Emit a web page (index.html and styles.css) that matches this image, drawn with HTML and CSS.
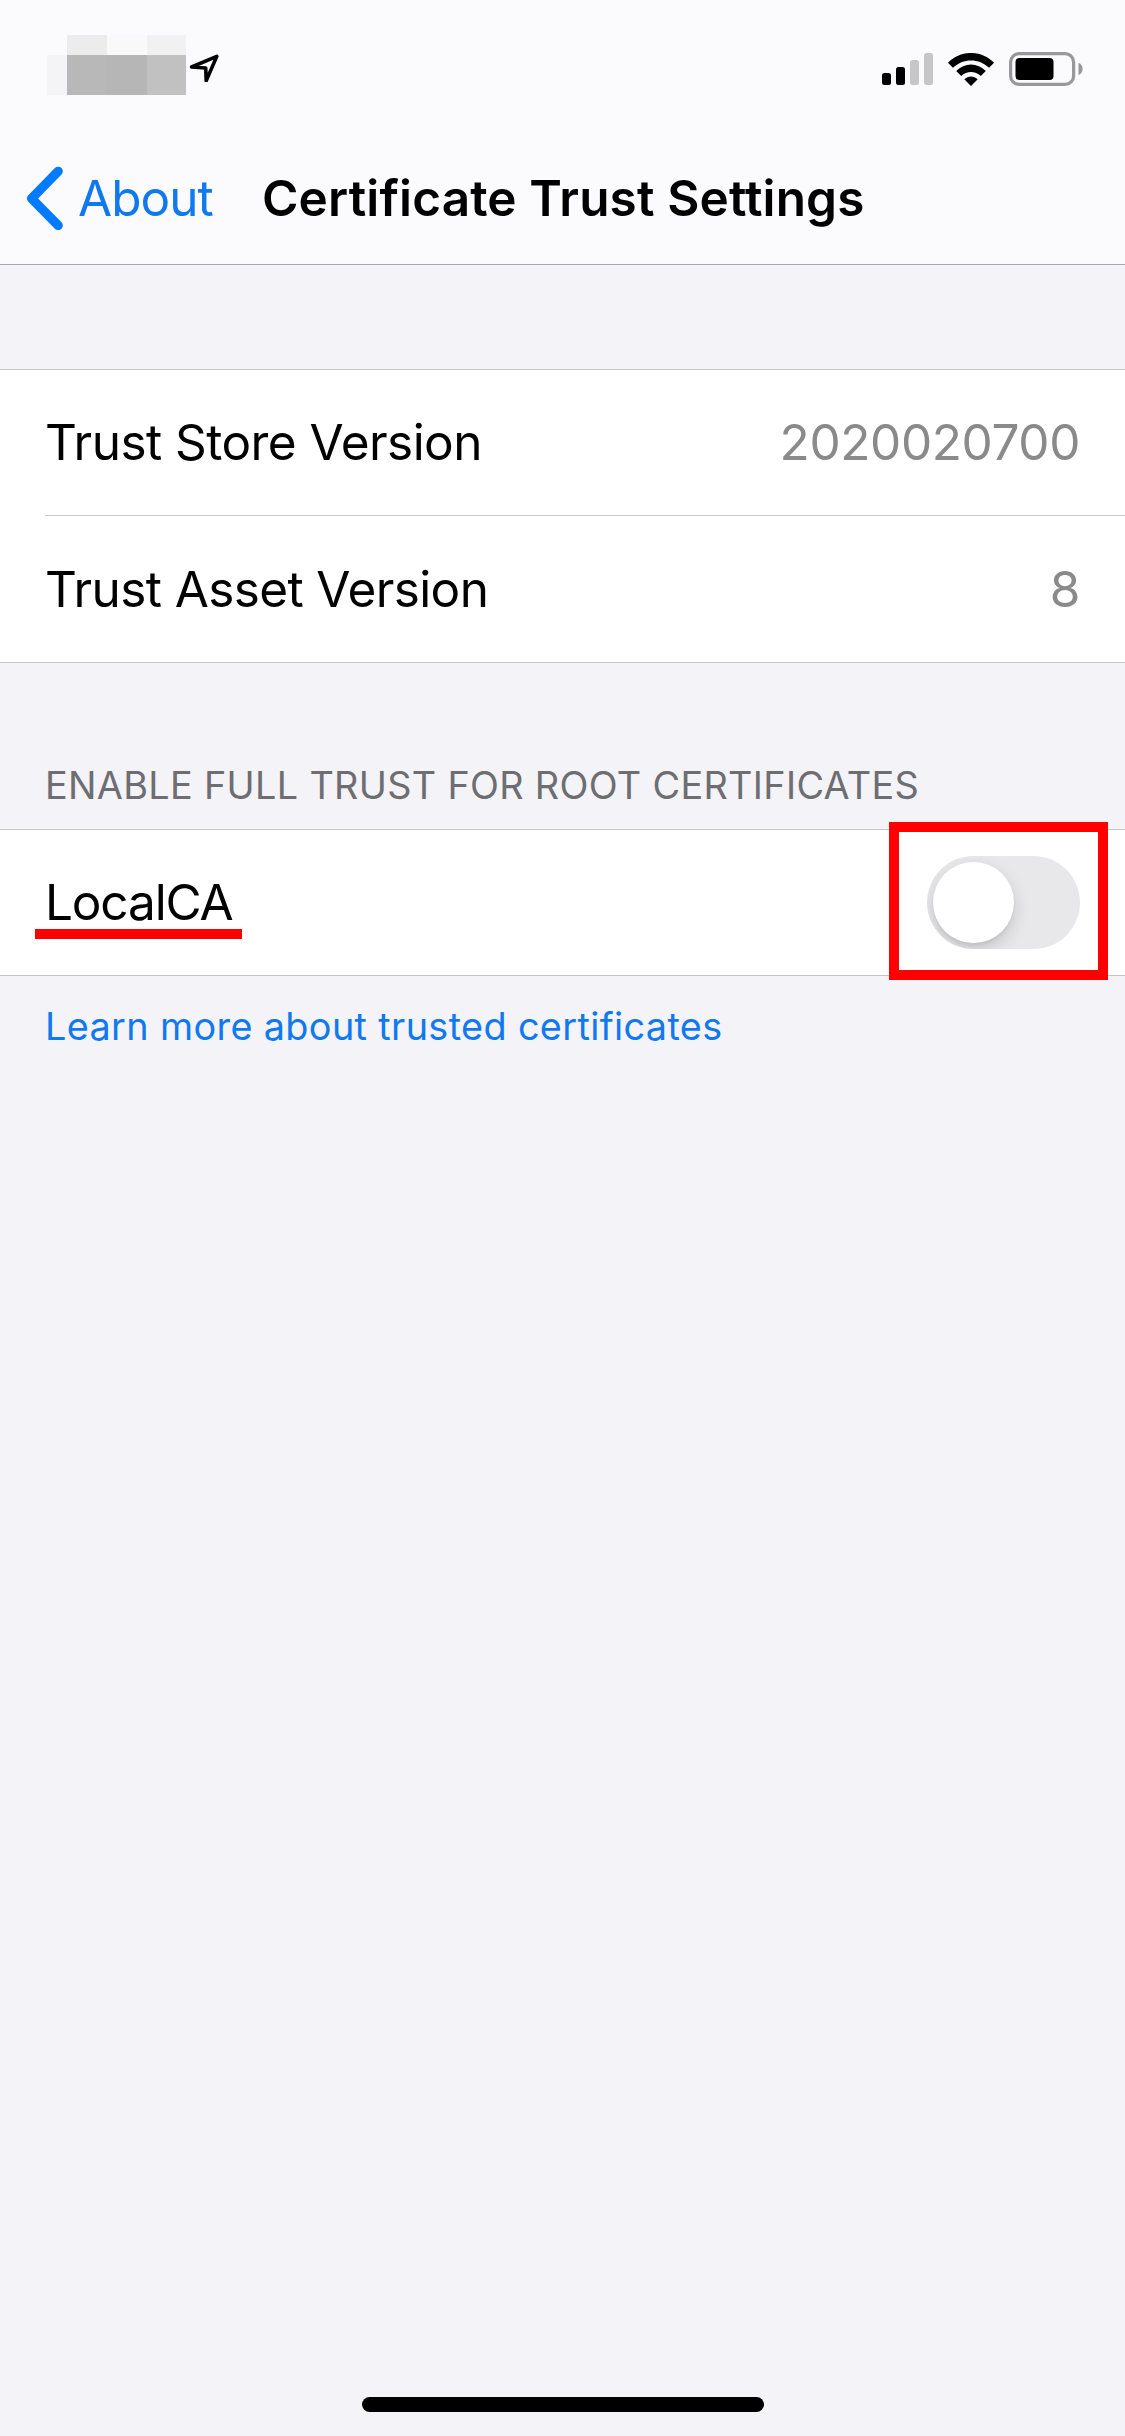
FILE: index.html
```
<!DOCTYPE html>
<html lang="en">
<head>
<meta charset="utf-8">
<title>Certificate Trust Settings</title>
<link rel="stylesheet" href="styles.css">
</head>
<body>
<div class="screen">
  <header class="top">
    <div class="status">
      <div class="status-left">
        <div class="mosaic">
          <i></i><i class="m1"></i><i class="m2"></i><i class="m3"></i>
          <i class="m4"></i><i class="m5"></i><i class="m6"></i><i class="m7"></i>
        </div>
        <svg class="location" width="34" height="34" viewBox="0 0 34 34"><path d="M5.600 19 30.800 8.400 20.200 32.800 19.700 20Z" fill="none" stroke="#000" stroke-width="3.600" stroke-linejoin="round"/></svg>
      </div>
      <div class="status-right">
        <svg width="51" height="32" viewBox="0 0 51 32">
          <rect x="0" y="20" width="9" height="12" rx="2.500"/>
          <rect x="14" y="14" width="9" height="18" rx="2.500"/>
          <rect x="28" y="7" width="9" height="25" rx="2.500" fill="#c6c6c7"/>
          <rect x="42" y="0" width="9" height="32" rx="2.500" fill="#c6c6c7"/>
        </svg>
        <svg width="46" height="33" viewBox="0 0 46 33">
          <path d="M0 9.800C12.500-3.300 33.500-3.300 46 9.800L41.100 14.800C31.300 4.900 14.700 4.900 4.900 14.800Z"/>
          <path d="M8.200 18C16.500 9.300 29.500 9.300 37.800 18L32.800 23C27.200 17.700 18.800 17.700 13.200 23Z"/>
          <path d="M16.300 26.300C20.200 22.400 25.800 22.400 29.700 26.300L23 33Z"/>
        </svg>
        <svg width="75" height="34" viewBox="0 0 75 34">
          <rect x="1.600" y="1.600" width="63" height="30.800" rx="8.500" fill="none" stroke="#98989a" stroke-width="3.200"/>
          <rect x="6.500" y="6" width="38" height="22" rx="4"/>
          <path d="M69.500 10.800C75 13 75 21 69.500 23.200Z" fill="#98989a"/>
        </svg>
      </div>
    </div>
    <nav class="nav">
      <a class="back">
        <svg width="37" height="64" viewBox="0 0 37 64"><path d="M32.200 5.300 5.600 32.500 32.200 59.500" fill="none" stroke="#007aff" stroke-width="9.300" stroke-linecap="round" stroke-linejoin="round"/></svg>
        <span class="about">About</span>
      </a>
      <h1 class="title">Certificate Trust Settings</h1>
    </nav>
  </header>
  <main>
    <section class="group versions">
      <div class="row"><span class="label store">Trust Store Version</span><span class="value">2020020700</span></div>
      <div class="divider"></div>
      <div class="row"><span class="label asset">Trust Asset Version</span><span class="value">8</span></div>
    </section>
    <h2 class="caption">ENABLE FULL TRUST FOR ROOT CERTIFICATES</h2>
    <section class="group">
      <div class="row">
        <span class="label local">LocalCA<i class="underline"></i></span>
        <span class="switch"><span class="track"><i class="knob"></i></span><i class="highlight"></i></span>
      </div>
    </section>
    <a class="learn">Learn more about trusted certificates</a>
  </main>
  <div class="home"></div>
</div>
</body>
</html>
```
FILE: styles.css
```
* { box-sizing: border-box; }
body { margin: 0; font-family: Inter, "Liberation Sans", sans-serif; color: #000; }
.screen { width: 1125px; height: 2436px; background: #f3f3f8; display: flex; flex-direction: column; overflow: hidden; }
.top { height: 265px; background: #fbfbfd; border-bottom: 1px solid #a9a9ac; }
.status { height: 132px; padding: 35px 41px 0 47px; display: flex; justify-content: space-between; align-items: flex-start; }
.status-left { display: flex; }
.mosaic { display: grid; grid-template-columns: 20px 40px 40px 39px; grid-template-rows: 20px 40px; }
.m1 { background: #ececed; }
.m2 { background: #f9f9fa; }
.m3 { background: #f1f1f2; }
.m4 { background: #f4f4f6; }
.m5 { background: #b8b8b9; }
.m6 { background: #b6b6b7; }
.m7 { background: #c1c1c2; }
.location { margin-top: 13px; }
.status-right { display: flex; align-items: flex-end; gap: 15px; height: 51px; }
.status-right svg:first-child { margin-bottom: 1px; }
.nav { height: 132px; display: flex; align-items: center; padding-left: 26px; }
.back { display: flex; align-items: center; gap: 15px; width: 236px; color: #1079ef; }
.about { font-size: 49.5px; line-height: 60px; letter-spacing: -.95px; }
.title { margin: 0; font-size: 49.5px; line-height: 60px; font-weight: 600; letter-spacing: .14px; white-space: nowrap; }
.group { background: #fff; border-top: 1px solid #c6c6c9; border-bottom: 1px solid #c6c6c9; }
.versions { margin-top: 104px; }
.row { height: 145px; padding: 0 45px; display: flex; align-items: center; justify-content: space-between; font-size: 49.5px; line-height: 60px; }
.row .label, .row .value { padding-bottom: 2px; }
.versions .row:last-child { height: 146px; }
.versions .row:last-child .label, .versions .row:last-child .value { padding-bottom: 0; }
.divider { height: 1px; margin-left: 45px; background: #c8c8ca; }
.store { letter-spacing: -.54px; }
.asset { letter-spacing: -.61px; }
.local { letter-spacing: -1.15px; position: relative; }
.value { color: #8a8a8a; letter-spacing: -.38px; }
.caption { margin: 0; height: 166px; padding: 99px 45px 0 45px; font-size: 37.8px; line-height: 46px; font-weight: 400; letter-spacing: .32px; color: #6d6d72; }
.underline { position: absolute; left: -10px; top: 57px; width: 207px; height: 10px; background: #f00; }
.switch { position: relative; width: 153px; height: 93px; }
.track { display: block; height: 100%; padding: 6px; border-radius: 47px; background: #e8e8ea; overflow: hidden; }
.knob { display: block; width: 81px; height: 81px; border-radius: 50%; background: #fff; box-shadow: 0 7px 18px rgba(0,0,0,.15), 0 3px 3px rgba(0,0,0,.05); }
.highlight { position: absolute; left: -38px; top: -34px; width: 219px; height: 158px; border: 10px solid #f00; }
.learn { display: block; padding: 27px 45px 0; font-size: 37.8px; line-height: 46px; letter-spacing: .36px; color: #1079ef; }
.home { width: 402px; height: 15px; border-radius: 8px; background: #000; margin: auto auto 24px 362px; }
```
